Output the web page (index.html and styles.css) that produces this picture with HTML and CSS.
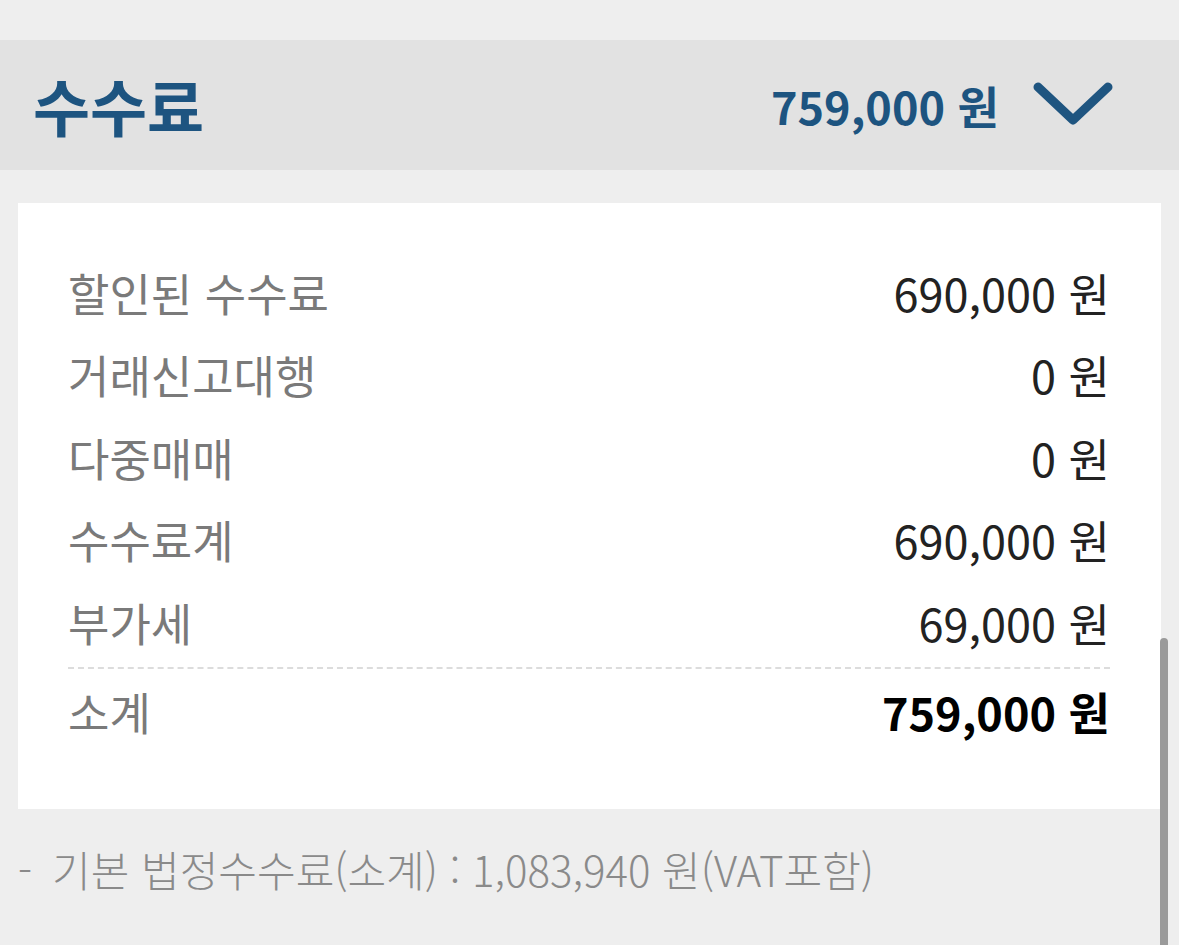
FILE: index.html
```html
<!DOCTYPE html>
<html lang="ko">
<head>
<meta charset="utf-8">
<link rel="stylesheet" href="styles.css">
</head>
<body>
<div class="page">
  <div class="top-space"></div>
  <div class="section-head">
    <h2 class="title">수수료</h2>
    <div class="head-right">
      <span class="head-amount">759,000 원</span>
      <svg class="chev" width="80" height="50" viewBox="0 0 80 50"><polyline points="5,8 40,41 75,8" fill="none" stroke="#1f5580" stroke-width="9" stroke-linecap="round" stroke-linejoin="round"/></svg>
    </div>
  </div>
  <div class="card">
    <div class="row"><span class="label">할인된 수수료</span><span class="value">690,000 원</span></div>
    <div class="row"><span class="label">거래신고대행</span><span class="value">0 원</span></div>
    <div class="row"><span class="label">다중매매</span><span class="value">0 원</span></div>
    <div class="row"><span class="label">수수료계</span><span class="value">690,000 원</span></div>
    <div class="row"><span class="label">부가세</span><span class="value">69,000 원</span></div>
    <div class="divider"></div>
    <div class="row total"><span class="label">소계</span><span class="value">759,000 원</span></div>
  </div>
  <p class="note"><span class="dash">-</span>기본 법정수수료(소계) : 1,083,940 원(VAT포함)</p>
</div>
<div class="scrollbar"></div>
</body>
</html>
```
FILE: styles.css
```css
html, body {
  margin: 0;
  padding: 0;
}
body {
  background: #eeeeee;
  font-family: "Noto Sans CJK KR", "Noto Sans", sans-serif;
  width: 1179px;
  height: 945px;
  overflow: hidden;
}
.page {
  display: flex;
  flex-direction: column;
}
.top-space {
  height: 40px;
}
.section-head {
  height: 130px;
  background: #e2e2e2;
  display: flex;
  align-items: center;
  justify-content: space-between;
  padding: 0 66px 0 33px;
}
.title {
  margin: 0;
  font-size: 62px;
  font-weight: 700;
  color: #1d5480;
}
.head-right {
  display: flex;
  align-items: center;
  gap: 34px;
}
.head-amount {
  font-size: 45px;
  font-weight: 700;
  color: #1d5480;
}
.chev {
  display: block;
  margin-top: -2px;
}
.card {
  margin: 33px 18px 0 18px;
  background: #ffffff;
  padding: 48px 51px 54px 50px;
  display: flex;
  flex-direction: column;
}
.row {
  height: 82.5px;
  display: flex;
  align-items: center;
  justify-content: space-between;
}
.label {
  font-size: 45px;
  color: #7a7a7a;
}
.value {
  font-size: 45px;
  color: #222222;
}
.divider {
  border-top: 2px dashed #dcdcdc;
  margin-top: 3px;
}
.total {
  height: 86px;
}
.total .value {
  font-weight: 700;
  color: #000000;
}
.note {
  margin: 29px 0 0 18px;
  font-size: 42px;
  font-weight: 300;
  color: #8a8a8a;
}
.dash {
  margin-right: 20px;
}
.scrollbar {
  position: fixed;
  left: 1160px;
  top: 638px;
  width: 8px;
  height: 320px;
  background: #9a9a9a;
  border-radius: 4px;
}
```
